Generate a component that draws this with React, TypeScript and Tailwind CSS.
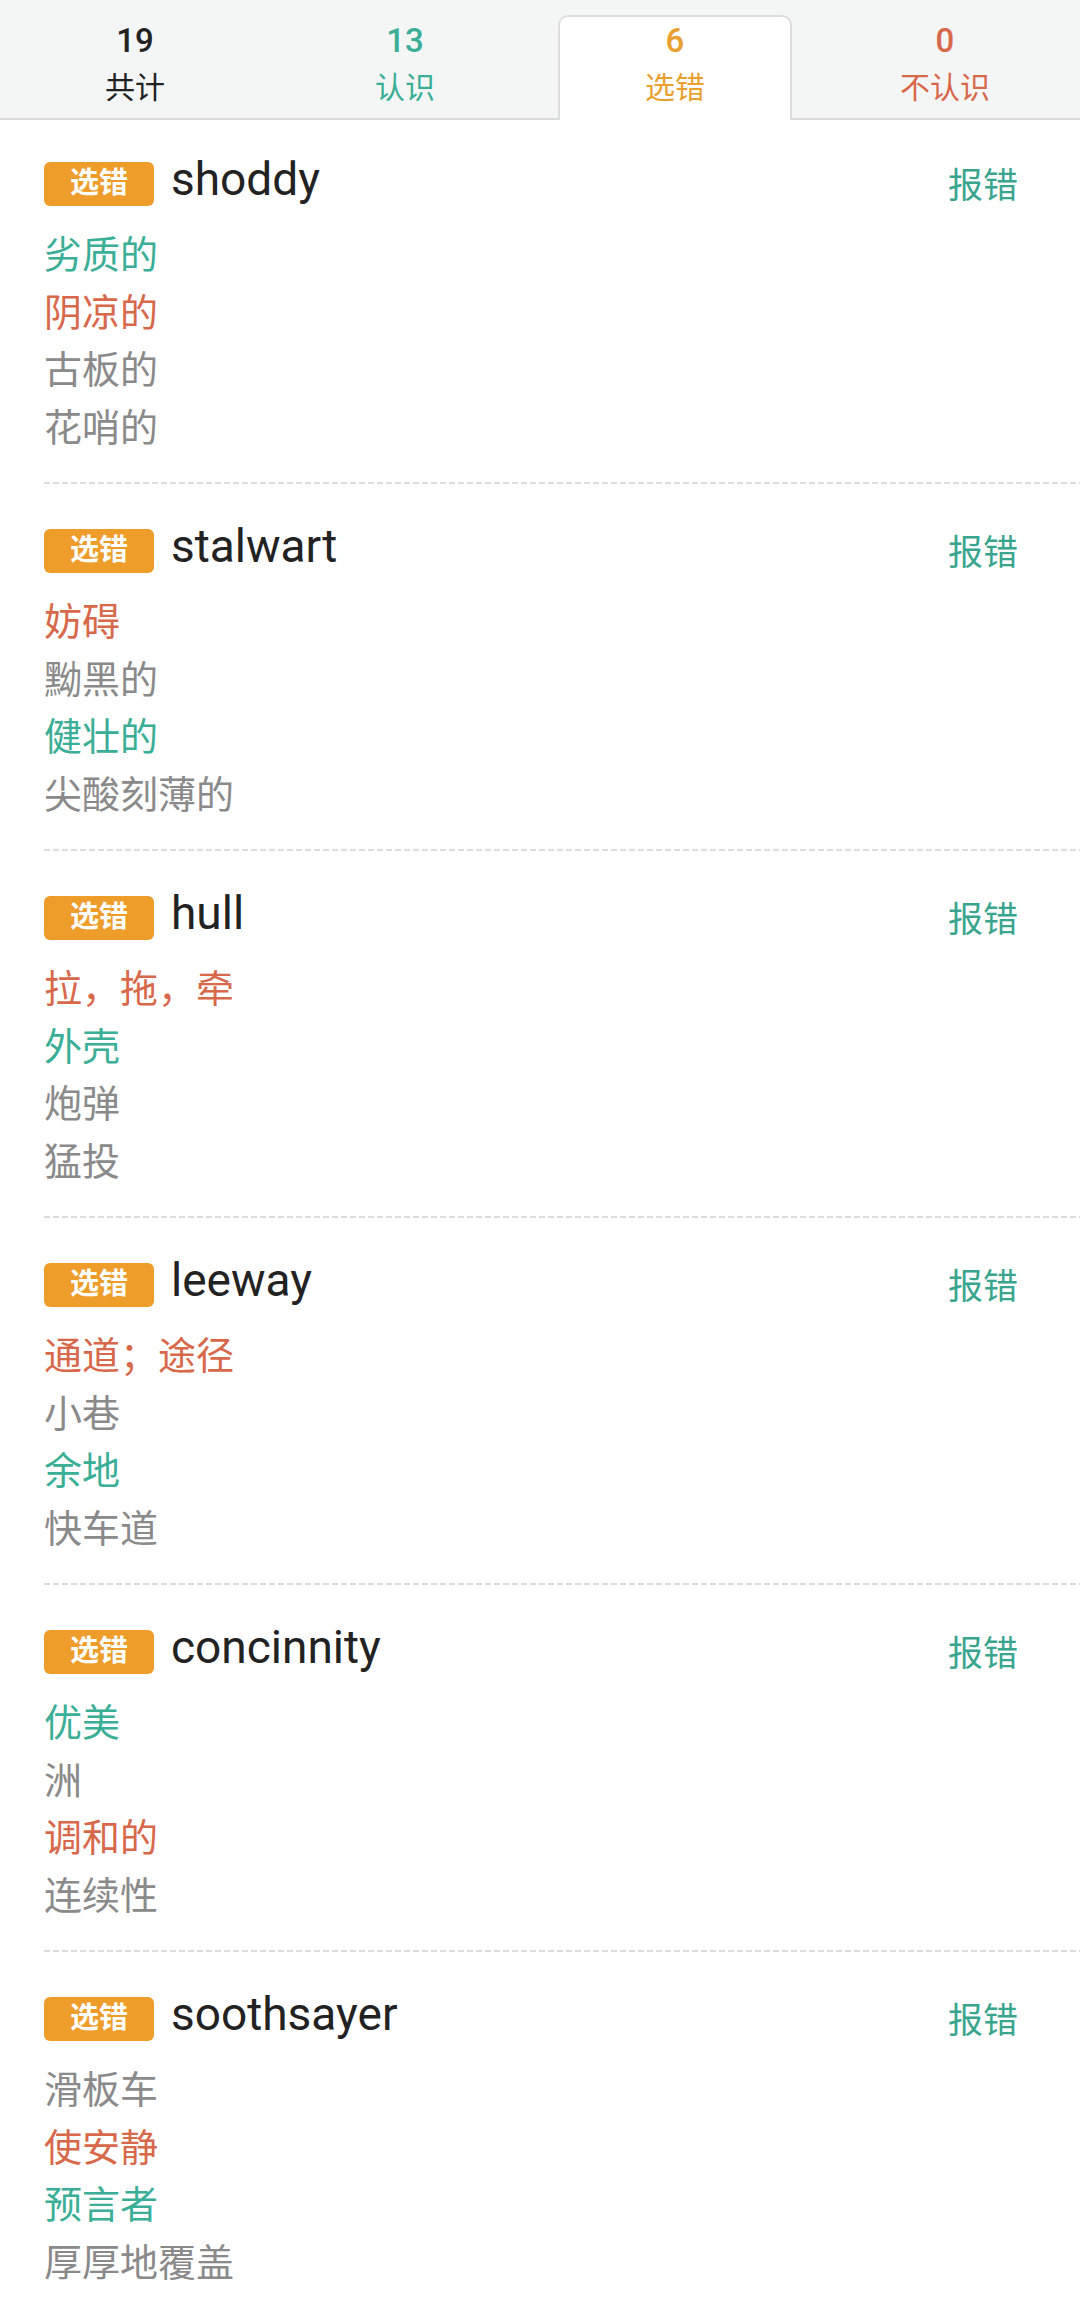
type Tone = 'ok' | 'bad' | 'plain'

interface Word {
    word: string
    meanings: { text: string; tone: Tone }[]
}

const words: Word[] = [
    { word: 'shoddy', meanings: [{ text: '劣质的', tone: 'ok' }, { text: '阴凉的', tone: 'bad' }, { text: '古板的', tone: 'plain' }, { text: '花哨的', tone: 'plain' }] },
    { word: 'stalwart', meanings: [{ text: '妨碍', tone: 'bad' }, { text: '黝黑的', tone: 'plain' }, { text: '健壮的', tone: 'ok' }, { text: '尖酸刻薄的', tone: 'plain' }] },
    { word: 'hull', meanings: [{ text: '拉，拖，牵', tone: 'bad' }, { text: '外壳', tone: 'ok' }, { text: '炮弹', tone: 'plain' }, { text: '猛投', tone: 'plain' }] },
    { word: 'leeway', meanings: [{ text: '通道；途径', tone: 'bad' }, { text: '小巷', tone: 'plain' }, { text: '余地', tone: 'ok' }, { text: '快车道', tone: 'plain' }] },
    { word: 'concinnity', meanings: [{ text: '优美', tone: 'ok' }, { text: '洲', tone: 'plain' }, { text: '调和的', tone: 'bad' }, { text: '连续性', tone: 'plain' }] },
    { word: 'soothsayer', meanings: [{ text: '滑板车', tone: 'plain' }, { text: '使安静', tone: 'bad' }, { text: '预言者', tone: 'ok' }, { text: '厚厚地覆盖', tone: 'plain' }] },
]

const toneStyles: Record<Tone, string> = {
    ok: 'text-[#3aae96]',
    bad: 'text-[#d8684a]',
    plain: 'text-[#8a8a8a]',
}

const tabs = [
    { count: '19', label: '共计', color: 'text-[#222222]' },
    { count: '13', label: '认识', color: 'text-[#3aae96]' },
    { count: '6', label: '选错', color: 'text-[#e9a02f]' },
    { count: '0', label: '不认识', color: 'text-[#d8684a]' },
]

const font = "font-['Roboto','Noto_Sans_CJK_SC',sans-serif]"

export default function App() {
    const active = 2

    return (
        <div className={`w-[1080px] min-h-[2318px] bg-white ${font}`}>
            {/* tab bar */}
            <div className="grid grid-cols-4 h-[120px] bg-[#f4f6f6] border-b-2 border-[#dadada]">
                {tabs.map((tab, i) => (
                    i === active ?
                        <div key={i} className="mx-[18px] mt-[15px] mb-[-2px] bg-white border-2 border-b-0 border-[#dddddd] rounded-t-[10px] flex flex-col items-center pt-[4px]">
                            <span className={`text-[33px] leading-[40px] font-medium ${tab.color}`}>{tab.count}</span>
                            <span className={`mt-[7px] text-[30px] leading-[40px] ${tab.color}`}>{tab.label}</span>
                        </div>
                        :
                        <div key={i} className="flex flex-col items-center pt-[21px]">
                            <span className={`text-[33px] leading-[40px] font-medium ${tab.color}`}>{tab.count}</span>
                            <span className={`mt-[7px] text-[30px] leading-[40px] ${tab.color}`}>{tab.label}</span>
                        </div>
                ))}
            </div>

            {/* word list */}
            <div className="pl-[44px]">
                {words.map((item, i) => (
                    <div key={item.word}>
                        {i > 0 && (
                            <div className="h-[2px] bg-[repeating-linear-gradient(to_right,#dcdcdc_0_6px,transparent_6px_9px)]"></div>
                        )}
                        <div className={`${i === 0 ? 'pt-[42px]' : 'pt-[45px]'} pb-[25px] pr-[62px]`}>
                            <div className="flex items-center h-[44px]">
                                <span className="w-[110px] h-[44px] flex items-center justify-center rounded-[6px] bg-[#ee9c2a] text-white text-[29px] font-bold">选错</span>
                                <span className="ml-[17px] mb-[10px] text-[46px] leading-[44px] text-[#222222]">{item.word}</span>
                                <span className="ml-auto mt-[6px] text-[35px] text-[#3aa58f]">报错</span>
                            </div>
                            <div className="mt-[21px] flex flex-col">
                                {item.meanings.map((m, j) => (
                                    <span key={j} className={`text-[38px] leading-[57.5px] ${toneStyles[m.tone]}`}>{m.text}</span>
                                ))}
                            </div>
                        </div>
                    </div>
                ))}
            </div>
        </div>
    )
}
